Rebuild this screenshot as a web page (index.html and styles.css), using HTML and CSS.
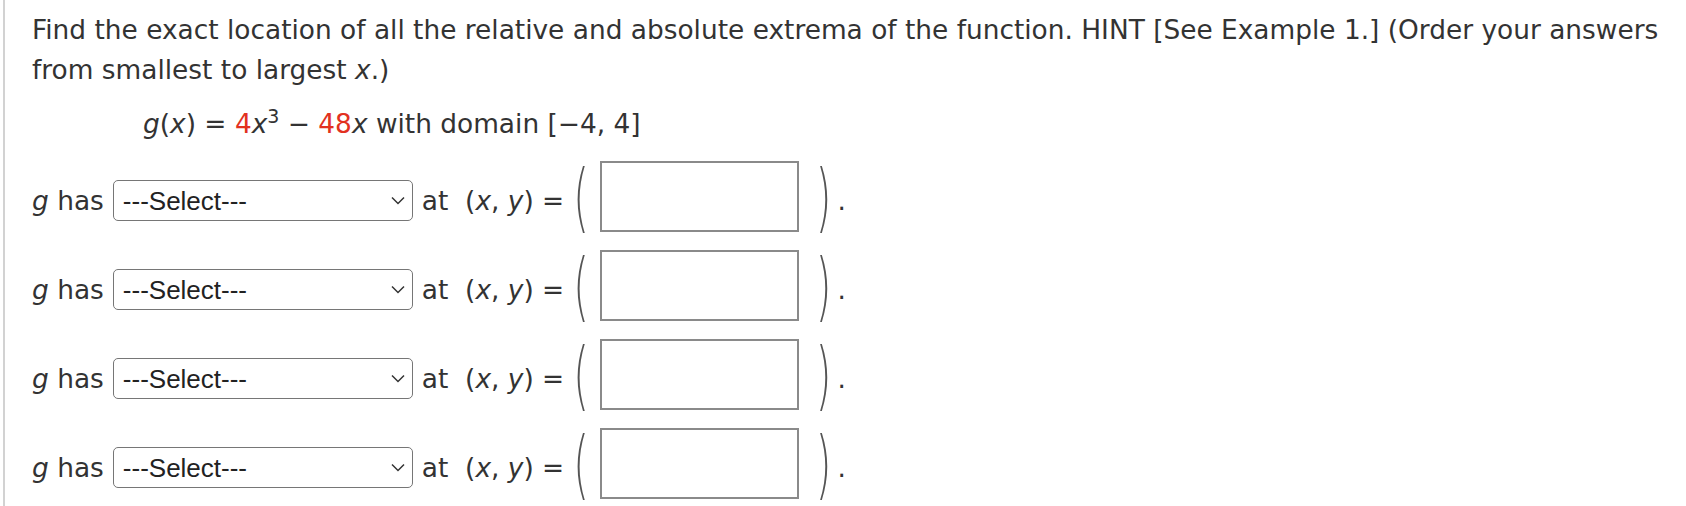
FILE: index.html
```html
<!DOCTYPE html>
<html>
<head>
<meta charset="utf-8">
<link rel="stylesheet" href="styles.css">
</head>
<body>
<div class="q">
  <div class="prompt">Find the exact location of all the relative and absolute extrema of the function. HINT [See Example 1.] (Order your answers from smallest to largest <i>x</i>.)</div>
  <div class="eq"><i>g</i>(<i>x</i>) = <span class="red">4</span><i>x</i><sup>3</sup> − <span class="red">48</span><i>x</i> with domain [−4, 4]</div>
  <div class="rows">
    <div class="row">
      <span class="lbl"><i>g</i> has</span>
      <div class="sel"><span>---Select---</span><svg class="chev" width="14" height="9" viewBox="0 0 14 9"><path d="M1 1.5 L7 7.5 L13 1.5" fill="none" stroke="#333" stroke-width="1.5"/></svg></div>
      <span class="at">at&nbsp; (<i>x</i>, <i>y</i>) =</span>
      <span class="paren open">(</span>
      <div class="box"></div>
      <span class="paren close">)</span><span class="dot">.</span>
    </div>
    <div class="row">
      <span class="lbl"><i>g</i> has</span>
      <div class="sel"><span>---Select---</span><svg class="chev" width="14" height="9" viewBox="0 0 14 9"><path d="M1 1.5 L7 7.5 L13 1.5" fill="none" stroke="#333" stroke-width="1.5"/></svg></div>
      <span class="at">at&nbsp; (<i>x</i>, <i>y</i>) =</span>
      <span class="paren open">(</span>
      <div class="box"></div>
      <span class="paren close">)</span><span class="dot">.</span>
    </div>
    <div class="row">
      <span class="lbl"><i>g</i> has</span>
      <div class="sel"><span>---Select---</span><svg class="chev" width="14" height="9" viewBox="0 0 14 9"><path d="M1 1.5 L7 7.5 L13 1.5" fill="none" stroke="#333" stroke-width="1.5"/></svg></div>
      <span class="at">at&nbsp; (<i>x</i>, <i>y</i>) =</span>
      <span class="paren open">(</span>
      <div class="box"></div>
      <span class="paren close">)</span><span class="dot">.</span>
    </div>
    <div class="row">
      <span class="lbl"><i>g</i> has</span>
      <div class="sel"><span>---Select---</span><svg class="chev" width="14" height="9" viewBox="0 0 14 9"><path d="M1 1.5 L7 7.5 L13 1.5" fill="none" stroke="#333" stroke-width="1.5"/></svg></div>
      <span class="at">at&nbsp; (<i>x</i>, <i>y</i>) =</span>
      <span class="paren open">(</span>
      <div class="box"></div>
      <span class="paren close">)</span><span class="dot">.</span>
    </div>
  </div>
</div>
</body>
</html>
```

FILE: styles.css
```css
html, body {
  margin: 0;
  padding: 0;
  background: #fff;
}
.q {
  margin-left: 3px;
  border-left: 2px solid #d2d2d2;
  min-height: 506px;
  box-sizing: border-box;
  padding: 10px 10px 0 27px;
  font-family: "DejaVu Sans", Verdana, sans-serif;
  font-size: 26.4px;
  line-height: 40px;
  color: #333;
}
.eq {
  margin-top: 14px;
  padding-left: 111px;
}
.eq sup {
  font-size: 0.72em;
  line-height: 0;
}
.red {
  color: #e2311f;
}
.rows {
  margin-top: 17px;
  display: flex;
  flex-direction: column;
  gap: 18px;
}
.row {
  display: flex;
  align-items: center;
  height: 71px;
}
.lbl, .at, .dot {
  margin-top: 8px;
}
.sel {
  margin-top: 8px;
  margin-left: 9px;
  width: 300px;
  height: 41px;
  box-sizing: border-box;
  border: 1px solid #767676;
  border-radius: 5px;
  display: flex;
  align-items: center;
  justify-content: space-between;
  padding: 0 7px 0 9px;
  font-family: "Liberation Sans", Arial, sans-serif;
  font-size: 26px;
  line-height: 1;
  color: #222;
}
.at {
  margin-left: 9px;
}
.paren {
  display: inline-block;
  font-size: 40px;
  line-height: 1;
  font-weight: 200;
  color: #555;
  transform: scaleY(1.85);
}
.open {
  margin-left: 9px;
}
.box {
  width: 199px;
  height: 71px;
  box-sizing: border-box;
  border: 2px solid #8a8a8a;
  margin-left: 11px;
}
.close {
  margin-left: 17px;
}
.dot {
  margin-left: 6px;
}
```
